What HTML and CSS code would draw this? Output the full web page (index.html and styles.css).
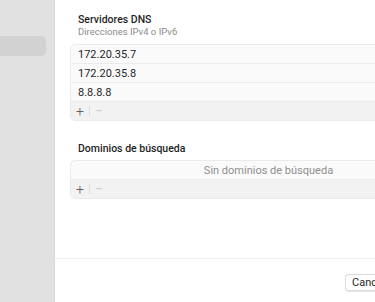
FILE: index.html
```html
<!DOCTYPE html>
<html lang="es">
<head>
    <meta charset="UTF-8">
    <meta name="viewport" content="width=device-width, initial-scale=1.0">
    <title>DNS</title>
    <link rel="stylesheet" href="styles.css">
</head>
<body>
    <div class="sidebar">
        <div class="sidebar-item"></div>
    </div>
    <div class="main">
        <div class="content">
            <div class="section-title">Servidores DNS</div>
            <div class="section-subtitle">Direcciones IPv4 o IPv6</div>
            <div class="list">
                <div class="list-row">172.20.35.7</div>
                <div class="list-row">172.20.35.8</div>
                <div class="list-row">8.8.8.8</div>
                <div class="list-footer">
                    <span class="btn-add">+</span>
                    <span class="footer-divider"></span>
                    <span class="btn-remove">&minus;</span>
                </div>
            </div>

            <div class="section-title second">Dominios de búsqueda</div>
            <div class="list">
                <div class="list-row empty">Sin dominios de búsqueda</div>
                <div class="list-footer">
                    <span class="btn-add">+</span>
                    <span class="footer-divider"></span>
                    <span class="btn-remove">&minus;</span>
                </div>
            </div>
        </div>
        <div class="bottom-bar">
            <button class="cancel">Cancelar</button>
        </div>
    </div>
</body>
</html>
```

FILE: styles.css
```css
html, body {
    margin: 0;
    height: 100%;
}
body {
    font-family: Roboto, "Noto Sans", sans-serif;
    color: #262626;
    display: flex;
    overflow: hidden;
    background-color: white;
}
.sidebar {
    width: 55px;
    flex-shrink: 0;
    background-color: #e1e1e1;
    border-right: 1px solid #d9d9d9;
    padding-top: 36px;
    box-sizing: border-box;
}
.sidebar-item {
    height: 20px;
    margin-left: -10px;
    margin-right: 8px;
    background-color: #d2d2d2;
    border-radius: 5px;
}
.main {
    flex: 1;
    display: flex;
    flex-direction: column;
    min-width: 0;
}
.content {
    padding: 13px 0 0 15px;
    height: 258px;
    box-sizing: border-box;
}
.section-title {
    font-size: 10.5px;
    font-weight: 500;
    line-height: 13px;
    padding-left: 8px;
    color: #1f1f1f;
}
.section-title.second {
    margin-top: 21px;
    margin-bottom: 5px;
}
.section-subtitle {
    font-size: 9.5px;
    line-height: 11px;
    color: #8c8c8c;
    padding-left: 8px;
    margin-bottom: 7px;
}
.list {
    width: 388px;
    border: 1px solid #ebebeb;
    border-radius: 5px;
    overflow: hidden;
    background-color: #fafafa;
}
.list-row {
    height: 19px;
    line-height: 19px;
    font-size: 11px;
    padding-left: 7px;
    border-bottom: 1px solid #ececec;
    box-sizing: border-box;
}
.list-row.empty {
    text-align: center;
    color: #8e8e8e;
}
.list-footer {
    height: 18px;
    background-color: #f2f2f2;
    display: flex;
    align-items: center;
    padding-left: 4px;
    gap: 4px;
}
.btn-add, .btn-remove {
    font-size: 14px;
    font-weight: 300;
    line-height: 14px;
    width: 10px;
    text-align: center;
}
.btn-add {
    color: #606060;
}
.btn-remove {
    color: #bcbcbc;
}
.footer-divider {
    width: 1px;
    height: 10px;
    background-color: #dddddd;
}
.bottom-bar {
    border-top: 1px solid #f0f0f0;
    flex: 1;
    padding: 12px 0 0 290px;
}
.cancel {
    font-family: Roboto, "Noto Sans", sans-serif;
    font-size: 11px;
    height: 17px;
    padding: 0 6px;
    background-color: white;
    border: 1px solid #dcdcdc;
    border-radius: 4px;
    box-shadow: 0 0.5px 1px rgba(0,0,0,0.1);
    color: #262626;
    white-space: nowrap;
}
```
